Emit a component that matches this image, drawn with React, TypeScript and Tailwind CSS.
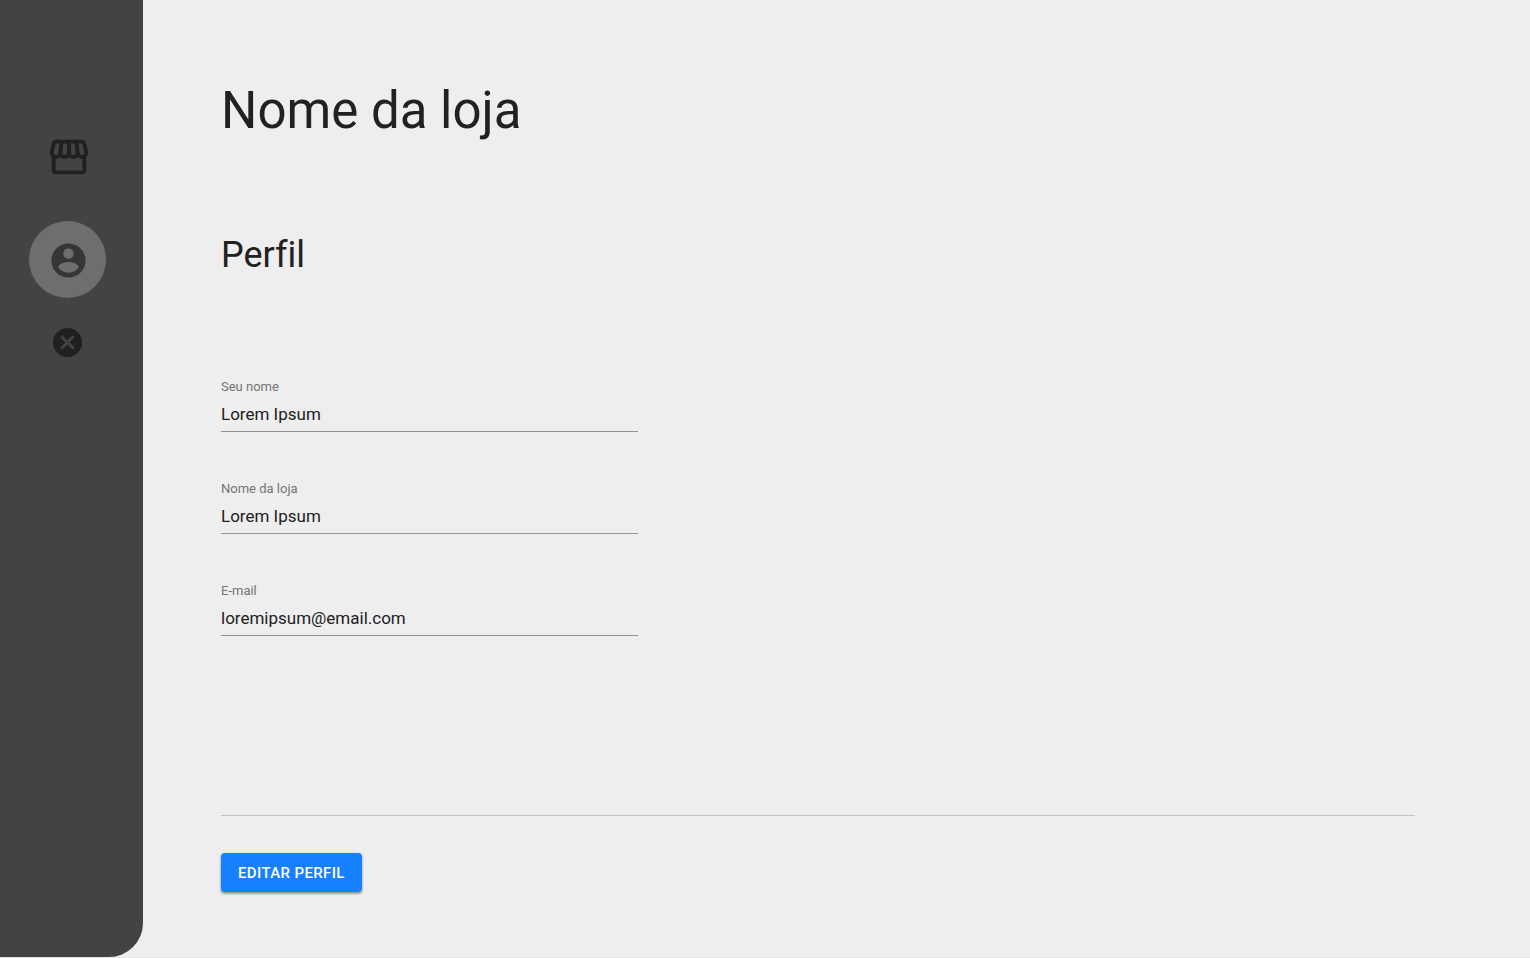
import { MdCancel } from "react-icons/md";

type FieldProps = { id: string; label: string; value: string; type?: string };

function StorefrontIcon() {
  return (
    <svg viewBox="0 0 24 24" className="size-[46px]" fill="currentColor" aria-hidden="true">
      <path d="M21.9 8.89l-1.05-4.37c-.22-.9-1-1.52-1.91-1.52H5.05c-.9 0-1.69.63-1.9 1.52L2.1 8.89c-.24 1.02-.02 2.06.62 2.88.08.11.19.19.28.29V19c0 1.1.9 2 2 2h14c1.1 0 2-.9 2-2v-6.94c.09-.09.2-.18.28-.28.64-.82.87-1.87.62-2.89zm-2.99-3.9l1.05 4.37c.1.42.01.84-.25 1.17-.14.18-.44.47-.94.47-.61 0-1.14-.49-1.21-1.14L16.98 5l1.93-.01zM13 5h1.96l.54 4.52c.05.39-.07.78-.33 1.07-.22.26-.54.41-.95.41-.67 0-1.22-.59-1.22-1.31V5zM8.49 9.52L9.04 5H11v4.69c0 .72-.55 1.31-1.29 1.31-.34 0-.65-.15-.89-.41-.25-.29-.37-.68-.33-1.07zm-4.45-.16L5.05 5h1.97l-.58 4.86c-.08.65-.6 1.14-1.21 1.14-.49 0-.8-.29-.93-.47-.27-.32-.36-.75-.26-1.17zM5 19v-6.03c.08.01.15.03.23.03.87 0 1.66-.36 2.24-.95.6.6 1.4.95 2.31.95.87 0 1.65-.36 2.23-.93.59.57 1.39.93 2.29.93.84 0 1.64-.35 2.24-.95.58.59 1.37.95 2.24.95.08 0 .15-.02.23-.03V19H5z" />
    </svg>
  );
}

function AccountIcon() {
  return (
    <svg viewBox="0 0 24 24" className="size-[41px]" fill="currentColor" aria-hidden="true">
      <path d="M12 2C6.48 2 2 6.48 2 12s4.48 10 10 10 10-4.48 10-10S17.52 2 12 2zm0 3c1.66 0 3 1.34 3 3s-1.34 3-3 3-3-1.34-3-3 1.34-3 3-3zm0 14.2c-2.5 0-4.71-1.28-6-3.22.03-1.99 4-3.08 6-3.08 1.99 0 5.97 1.09 6 3.08-1.29 1.94-3.5 3.22-6 3.22z" />
    </svg>
  );
}

function Field({ id, label, value, type = "text" }: FieldProps) {
  return (
    <div className="flex flex-col">
      <label htmlFor={id} className="text-[13px] leading-4 text-[#757575]">
        {label}
      </label>
      <input
        id={id}
        type={type}
        defaultValue={value}
        className="h-[37px] w-full border-b border-[#949494] bg-transparent pt-[2px] text-[17px] text-[#212121] outline-none"
      />
    </div>
  );
}

function Sidebar() {
  return (
    <nav
      aria-label="Menu"
      className="flex w-[143px] shrink-0 flex-col items-center rounded-br-[34px] bg-[#434343] pt-[134px] pr-2 text-[#202020]"
    >
      <a href="#loja" aria-label="Loja" className="pl-[2px]">
        <StorefrontIcon />
      </a>
      <a
        href="#perfil"
        aria-label="Perfil"
        aria-current="page"
        className="mt-[41px] flex size-[77px] items-center justify-center rounded-full bg-[#6e6e6e] pt-[2px] pl-[2px] text-[#363636]"
      >
        <AccountIcon />
      </a>
      <button type="button" aria-label="Sair" className="mt-[27px]">
        <MdCancel size={35} />
      </button>
    </nav>
  );
}

export default function App() {
  return (
    <div className="flex min-h-screen flex-col border-b border-[#e2e2e2] bg-[#eeeeee] font-['Roboto',sans-serif] text-[#212121] [font-variant-ligatures:none]">
      <div className="flex grow">
        <Sidebar />
        <main className="grow pt-[81px] pr-[115px] pb-16 pl-[78px]">
          <h1 className="text-[51px] leading-[60px]">Nome da loja</h1>
          <h2 className="mt-[92px] text-[36px] leading-[44px]">Perfil</h2>
          <form>
            <div className="mt-[102px] flex max-w-[417px] flex-col gap-[49px]">
              <Field id="nome" label="Seu nome" value="Lorem Ipsum" />
              <Field id="loja" label="Nome da loja" value="Lorem Ipsum" />
              <Field id="email" label="E-mail" value="loremipsum@email.com" type="email" />
            </div>
            <hr className="mt-[179px] border-[#c3c3c3]" />
            <button
              type="button"
              className="mt-[37px] h-[39px] rounded bg-[#1780ff] px-[17px] pt-[2px] text-[15px] font-medium tracking-wide text-white uppercase shadow-[0_1px_3px_rgba(0,0,0,0.3),0_2px_2px_rgba(0,0,0,0.2)]"
            >
              Editar perfil
            </button>
          </form>
        </main>
      </div>
    </div>
  );
}
